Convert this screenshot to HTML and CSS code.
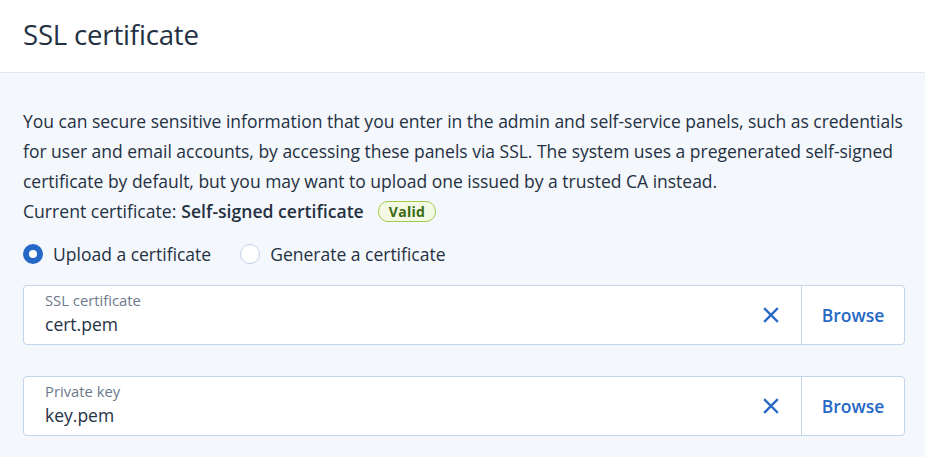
FILE: index.html
```html
<!DOCTYPE html>
<html>
<head>
<meta charset="utf-8">
<link rel="stylesheet" href="styles.css">
</head>
<body>
<div class="header"><h1 class="title">SSL certificate</h1></div>
<div class="content">
  <p class="desc">You can secure sensitive information that you enter in the admin and self-service panels, such as credentials for user and email accounts, by accessing these panels via SSL. The system uses a pregenerated self-signed certificate by default, but you may want to upload one issued by a trusted CA instead.</p>
  <div class="current">Current certificate: <b>Self-signed certificate</b><span class="badge">Valid</span></div>
  <div class="radios">
    <label class="radio"><span class="dot checked"></span>Upload a certificate</label>
    <label class="radio"><span class="dot"></span>Generate a certificate</label>
  </div>
  <div class="field">
    <div class="field-main">
      <div class="field-label">SSL certificate</div>
      <div class="field-value">cert.pem</div>
    </div>
    <span class="clear"><svg width="16" height="16" viewBox="0 0 16 16"><path d="M2 2L14 14M14 2L2 14" stroke="#2668c5" stroke-width="2.4" stroke-linecap="square"/></svg></span>
    <span class="browse">Browse</span>
  </div>
  <div class="field">
    <div class="field-main">
      <div class="field-label">Private key</div>
      <div class="field-value">key.pem</div>
    </div>
    <span class="clear"><svg width="16" height="16" viewBox="0 0 16 16"><path d="M2 2L14 14M14 2L2 14" stroke="#2668c5" stroke-width="2.4" stroke-linecap="square"/></svg></span>
    <span class="browse">Browse</span>
  </div>
</div>
</body>
</html>
```
FILE: styles.css
```css
html, body { margin: 0; padding: 0; }
body {
  font-family: "Open Sans", "Noto Sans", sans-serif;
  color: #243143;
  background: #f4f7fb;
  width: 925px;
  height: 457px;
  overflow: hidden;
}
.header {
  background: #fff;
  height: 72px;
  border-bottom: 1px solid #e3e8ef;
  display: flex;
  align-items: center;
  padding-left: 23px;
}
.title {
  margin: 0;
  font-size: 27.6px;
  font-weight: 400;
  letter-spacing: -0.2px;
  position: relative;
  top: -2px;
}
.content {
  padding: 33px 20px 0 23px;
}
.desc {
  margin: 0;
  font-size: 17.5px;
  line-height: 30px;
  letter-spacing: -0.01px;
}
.current {
  font-size: 17.6px;
  line-height: 30px;
  display: flex;
  align-items: center;
}
.current b { font-weight: 600; margin-left: 5px; }
.badge {
  margin-left: 14px;
  border: 1px solid #a3cc4f;
  background: #f3f9e3;
  color: #3b6a12;
  font-size: 14px;
  font-weight: 700;
  line-height: 19px;
  padding: 0 10px;
  border-radius: 10px;
  letter-spacing: 0.3px;
}
.radios {
  display: flex;
  gap: 29px;
  margin-top: 14px;
  height: 28px;
  align-items: center;
}
.radio {
  display: flex;
  align-items: center;
  font-size: 17.5px;
}
.dot {
  width: 18px;
  height: 18px;
  border-radius: 50%;
  border: 1px solid #c1d1ea;
  background: #fff;
  margin-right: 10px;
  box-sizing: content-box;
}
.dot.checked {
  border: 6px solid #2668c5;
  width: 8px;
  height: 8px;
}
.field {
  margin-top: 17px;
  height: 58px;
  border: 1px solid #c4d4ec;
  border-radius: 4px;
  background: #fff;
  display: flex;
  align-items: stretch;
}
.field + .field { margin-top: 31px; }
.field-main {
  flex: 1;
  padding: 4px 0 0 21px;
}
.field-label {
  font-size: 14.8px;
  color: #6c7a8c;
  line-height: 21px;
}
.field-value {
  font-size: 17.5px;
  line-height: 27px;
}
.clear {
  width: 60px;
  display: flex;
  align-items: center;
  justify-content: center;
  padding-left: 2px;
}
.browse {
  border-left: 1px solid #c4d4ec;
  width: 103px;
  display: flex;
  align-items: center;
  justify-content: center;
  color: #2668c5;
  font-size: 17.5px;
  font-weight: 600;
  padding-bottom: 0;
  box-sizing: border-box;
}
```
